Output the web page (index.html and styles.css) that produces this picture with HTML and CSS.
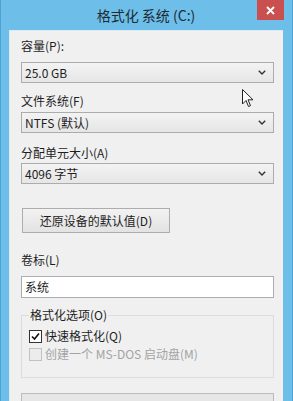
FILE: index.html
```html
<!DOCTYPE html>
<html lang="zh-CN">
<head>
<meta charset="utf-8">
<link rel="stylesheet" href="styles.css">
</head>
<body>
<div class="window">
  <div class="titlebar">
    <div class="title">格式化 系统 (C:)</div>
    <div class="close">
      <svg width="9" height="9" viewBox="0 0 9 9"><path d="M1 1 L8 8 M8 1 L1 8" stroke="#fff" stroke-width="1.8"/></svg>
    </div>
  </div>
  <div class="panel">
    <div class="label l1">容量(P):</div>
    <div class="select s1"><span>25.0 GB</span><svg class="chev" width="8" height="5" viewBox="0 0 8 5"><path d="M0.8 0.8 L4 4 L7.2 0.8" fill="none" stroke="#333" stroke-width="1.4"/></svg></div>
    <div class="label l2">文件系统(F)</div>
    <div class="select s2"><span>NTFS (默认)</span><svg class="chev" width="8" height="5" viewBox="0 0 8 5"><path d="M0.8 0.8 L4 4 L7.2 0.8" fill="none" stroke="#333" stroke-width="1.4"/></svg></div>
    <div class="label l3">分配单元大小(A)</div>
    <div class="select s3"><span>4096 字节</span><svg class="chev" width="8" height="5" viewBox="0 0 8 5"><path d="M0.8 0.8 L4 4 L7.2 0.8" fill="none" stroke="#333" stroke-width="1.4"/></svg></div>
    <div class="button">还原设备的默认值(D)</div>
    <div class="label l4">卷标(L)</div>
    <div class="input">系统</div>
    <fieldset class="group">
      <legend>格式化选项(O)</legend>
      <div class="check">
        <span class="box on"><svg width="9" height="9" viewBox="0 0 9 9"><path d="M1 4.5 L3.5 7 L8 1.5" fill="none" stroke="#111" stroke-width="1.6"/></svg></span>
        <span>快速格式化(Q)</span>
      </div>
      <div class="check disabled">
        <span class="box"></span>
        <span>创建一个 MS-DOS 启动盘(M)</span>
      </div>
    </fieldset>
    <div class="progress"></div>
  </div>
  <svg class="cursor" width="12" height="19" viewBox="0 0 12 19"><path d="M0.5 0.5 L0.5 15 L4 11.5 L6.5 17.5 L8.5 16.6 L6 10.8 L11 10.8 Z" fill="#fff" stroke="#222" stroke-width="1" stroke-linejoin="round"/></svg>
</div>
</body>
</html>
```

FILE: styles.css
```css
html, body {
  margin: 0;
  padding: 0;
}
body {
  width: 293px;
  height: 401px;
  overflow: hidden;
  background: #6dbfe9;
  font-family: "Noto Sans CJK SC", "Noto Sans", sans-serif;
  font-size: 12px;
  color: #1e1e1e;
}
.window {
  position: relative;
  height: 401px;
  padding: 0 9px 0 8px;
  box-sizing: border-box;
  border-left: 1px solid #4fa3d4;
  border-right: 1px solid #4fa3d4;
}
.titlebar {
  height: 30px;
  display: grid;
  grid-template-columns: 1fr auto 1fr;
  margin: 0 -9px 0 -8px;
  padding: 0 8px 0 7px;
}
.title {
  grid-column: 2;
  font-size: 14px;
  line-height: 30px;
  color: #1f2a33;
}
.close {
  grid-column: 3;
  justify-self: end;
  width: 27px;
  height: 20px;
  background: #c9504e;
  display: flex;
  align-items: center;
  justify-content: center;
}
.panel {
  background: #f0f0f1;
  height: 371px;
  padding: 8px 9px 0 11px;
  box-sizing: border-box;
  border-left: 1px solid #dfe9f1;
  border-top: 1px solid #dfe9f1;
}
.label {
  line-height: 16px;
  height: 16px;
}
.l1 { margin-top: -1px; }
.l2 { margin-top: 10px; }
.l3 { margin-top: 12px; }
.l4 { margin-top: 19px; }
.select {
  height: 21px;
  box-sizing: border-box;
  border: 1px solid #acacac;
  background: linear-gradient(#f3f3f3, #e6e6e6);
  display: flex;
  align-items: center;
  justify-content: space-between;
  padding: 0 7px 0 3px;
  line-height: 19px;
}
.s1 { margin-top: 8px; }
.s2 { margin-top: 3px; }
.s3 { margin-top: 2px; }
.chev { flex: none; }
.button {
  margin-top: 24px;
  width: 148px;
  height: 25px;
  box-sizing: border-box;
  border: 1px solid #adadad;
  background: linear-gradient(#f2f2f2, #e3e3e3);
  text-align: center;
  line-height: 23px;
  margin-left: 1px;
}
.input {
  margin-top: 8px;
  height: 22px;
  box-sizing: border-box;
  border: 1px solid #abadb3;
  background: #fff;
  padding-left: 3px;
  line-height: 20px;
}
.group {
  margin: 9px 0 0 0;
  padding: 4px 6px 7px 7px;
  border: 1px solid #dcdcdc;
  height: 71px;
  box-sizing: border-box;
  min-width: 0;
}
.group legend {
  padding: 0 1px;
  margin-left: 0;
  line-height: 16px;
}
.check {
  display: flex;
  align-items: center;
  gap: 3px;
  height: 18px;
  line-height: 18px;
}
.box {
  width: 13px;
  height: 13px;
  box-sizing: border-box;
  border: 1px solid #333;
  background: #fff;
  display: flex;
  align-items: center;
  justify-content: center;
}
.disabled { color: #a3a3a3; }
.disabled .box {
  border-color: #c2c2c2;
  background: #ececec;
}
.progress {
  margin-top: 15px;
  height: 20px;
  border: 1px solid #bcbcbc;
  background: #e6e6e6;
}
.cursor {
  position: absolute;
  left: 241px;
  top: 89px;
}
```
